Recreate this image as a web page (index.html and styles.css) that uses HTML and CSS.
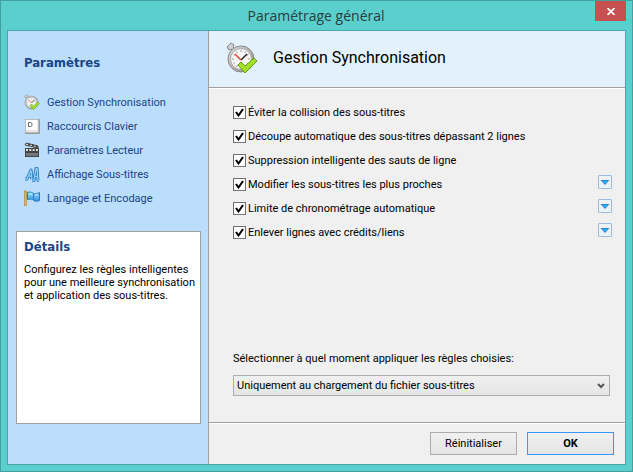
FILE: index.html
```html
<!DOCTYPE html>
<html lang="fr">
<head>
    <meta charset="UTF-8">
    <meta name="viewport" content="width=device-width, initial-scale=1.0">
    <title>Paramétrage général</title>
    <link rel="stylesheet" href="styles.css">
</head>
<body>
    <svg class="defs" aria-hidden="true">
        <defs>
            <linearGradient id="metal" x1="0" y1="0" x2="1" y2="1">
                <stop offset="0" stop-color="#e4e4e4"/>
                <stop offset="1" stop-color="#858585"/>
            </linearGradient>
            <linearGradient id="blue" x1="0" y1="0" x2="0" y2="1">
                <stop offset="0" stop-color="#9adcff"/>
                <stop offset="1" stop-color="#2f92e0"/>
            </linearGradient>
            <symbol id="stopwatch" viewBox="0 0 32 32">
                <path d="M1 5l4-4 3 2-1 2 3 3-2 2-3-3-2 1z" fill="#d0d0d0" stroke="#858585"/>
                <circle cx="15" cy="17" r="13" fill="url(#metal)" stroke="#888"/>
                <circle cx="15" cy="17" r="10.5" fill="#f6f6f6" stroke="#aaa"/>
                <path d="M15 8v2M15 24v2M6 17h2M22 17h2M10.500 9.500l1 1.500M19.500 9.500l-1 1.500M7.500 12.500l1.500 1M22.500 12.500l-1.500 1M7.500 21.500l1.500-1M10.500 25l1-2" stroke="#999"/>
                <path d="M15 18l6-6" stroke="#222" stroke-width="1.500"/>
                <path d="M15 18l-6-6" stroke="#e2452c" stroke-width="1.500"/>
                <path d="M12 23l3-3 4 4 9-8 3 3-12 12z" fill="#a4e028" stroke="#5f9c0c"/>
            </symbol>
            <symbol id="arrow" viewBox="0 0 10 6">
                <path d="M0.500 1h9L5 6z" fill="#2d83d0"/>
                <path d="M2.500 2h5L5 4.500z" fill="#27b4ff"/>
            </symbol>
        </defs>
    </svg>
    <div class="window">
        <div class="titlebar">
            <span class="titlebar-text">Paramétrage général</span>
            <button class="close" type="button" aria-label="Fermer">
                <svg width="8" height="7" viewBox="0 0 8 7"><path d="M0.500 0l7 7M7.500 0l-7 7" stroke="#fff" stroke-width="1.600"/></svg>
            </button>
        </div>
        <div class="content">
            <div class="sidebar">
                <h2>Paramètres</h2>
                <nav class="menu">
                    <a href="#"><svg viewBox="0 0 32 32"><use href="#stopwatch"/></svg>Gestion Synchronisation</a>
                    <a href="#">
                        <svg viewBox="0 0 16 16">
                            <rect x="1" y="1" width="15" height="15" rx="1" fill="#999"/>
                            <rect x="1.500" y="1.500" width="13" height="13" rx="1" fill="#e6e6e6" stroke="#bbb"/>
                            <rect x="2" y="2" width="11" height="10" fill="#fff"/>
                            <path d="M4.500 4.500h2l1.500 1v2l-1.500 1h-2z" fill="none" stroke="#666"/>
                        </svg>Raccourcis Clavier</a>
                    <a href="#">
                        <svg viewBox="0 0 16 16">
                            <path d="M2 1l12 3v2L1 3z" fill="#eee" stroke="#444"/>
                            <path d="M4 1.500l2 2M8 2.500l2 2M12 3.500l1 2" stroke="#333" stroke-width="1.500"/>
                            <rect x="1" y="6" width="14" height="9" fill="#444"/>
                            <path d="M2 8h12" stroke="#ddd" stroke-width="2" stroke-dasharray="2 1.300"/>
                            <path d="M2 12.500h12" stroke="#777" stroke-width="3"/>
                        </svg>Paramètres Lecteur</a>
                    <a href="#">
                        <svg viewBox="0 0 16 16" fill="none" stroke-linejoin="round">
                            <path d="M1 13h2l4-9 1 9M4 10h4M8 14.500h2l2-12h1l1 12h1M10 10.500h4" stroke="#2b78be" stroke-width="3"/>
                            <path d="M1 13h2l4-9 1 9M4 10h4M8 14.500h2l2-12h1l1 12h1M10 10.500h4" stroke="#8dd0f8" stroke-width="1.300"/>
                        </svg>Affichage Sous-titres</a>
                    <a href="#">
                        <svg viewBox="0 0 16 16">
                            <path d="M3.500 2.500c2-1 4 0 5 0l1 1c2 1 4 0 6-1v8c-2 1-4 1-6 0l-1-1c-2-1-3 0-5 0z" fill="url(#blue)" stroke="#2a7cc4"/>
                            <path d="M9.500 4v6" stroke="#2a7cc4"/>
                            <path d="M5 4h3M11 5h3" stroke="#d5f2ff"/>
                            <rect x="0.500" y="1" width="2" height="15" fill="#eab054" stroke="#a87020" stroke-width="0.500"/>
                        </svg>Langage et Encodage</a>
                </nav>
                <div class="details">
                    <h2>Détails</h2>
                    <p>Configurez les règles intelligentes pour une meilleure synchronisation et application des sous-titres.</p>
                </div>
            </div>
            <form class="main">
                <div class="header">
                    <svg viewBox="0 0 32 32"><use href="#stopwatch"/></svg>
                    <h1>Gestion Synchronisation</h1>
                </div>
                <div class="options">
                    <div class="option">
                        <label><input type="checkbox" checked>Éviter la collision des sous-titres</label>
                    </div>
                    <div class="option">
                        <label><input type="checkbox" checked>Découpe automatique des sous-titres dépassant 2 lignes</label>
                    </div>
                    <div class="option">
                        <label><input type="checkbox" checked>Suppression intelligente des sauts de ligne</label>
                    </div>
                    <div class="option">
                        <label><input type="checkbox" checked>Modifier les sous-titres les plus proches</label>
                        <button class="expand" type="button" aria-label="Options"><svg><use href="#arrow"/></svg></button>
                    </div>
                    <div class="option">
                        <label><input type="checkbox" checked>Limite de chronométrage automatique</label>
                        <button class="expand" type="button" aria-label="Options"><svg><use href="#arrow"/></svg></button>
                    </div>
                    <div class="option">
                        <label><input type="checkbox" checked>Enlever lignes avec crédits/liens</label>
                        <button class="expand" type="button" aria-label="Options"><svg><use href="#arrow"/></svg></button>
                    </div>
                </div>
                <div class="moment">
                    <label for="moment">Sélectionner à quel moment appliquer les règles choisies:</label>
                    <select id="moment">
                        <option selected>Uniquement au chargement du fichier sous-titres</option>
                    </select>
                </div>
                <div class="footer">
                    <button class="btn" type="reset">Réinitialiser</button>
                    <button class="btn btn-ok" type="submit">OK</button>
                </div>
            </form>
        </div>
    </div>
</body>
</html>
```
FILE: styles.css
```css
* {
    box-sizing: border-box;
}
body {
    margin: 0;
    font-family: Roboto, sans-serif;
    font-size: 11px;
    line-height: 13px;
    color: #000;
}
h1, h2, p {
    margin: 0;
}
button, select {
    font: inherit;
    color: inherit;
}
.defs {
    position: absolute;
    width: 0;
    height: 0;
}
.window {
    display: flex;
    flex-direction: column;
    min-height: 100vh;
    padding: 0 6px 6px;
    background-color: #5bcfce;
    border: 1px solid #469f9f;
}
.titlebar {
    display: flex;
    height: 29px;
    align-items: flex-start;
}
.titlebar-text {
    flex: 1;
    padding-left: 30px;
    text-align: center;
    font-family: "Open Sans", sans-serif;
    font-size: 14px;
    line-height: 29px;
    color: #26403f;
}
.close {
    display: flex;
    align-items: center;
    justify-content: center;
    width: 31px;
    height: 20px;
    padding: 0;
    border: none;
    background-color: #c75050;
}
.content {
    flex: 1;
    display: flex;
    border: 1px solid #4aa8a8;
}
/* left column */
.sidebar {
    width: 201px;
    display: flex;
    flex-direction: column;
    padding: 24px 7px 40px 8px;
    background-color: #badefb;
    border-right: 1px solid #a0a0a0;
}
.sidebar h2 {
    font-family: "DejaVu Sans Condensed", "DejaVu Sans", sans-serif;
    font-size: 13px;
    line-height: 16px;
    color: #1c4585;
}
.sidebar > h2 {
    padding-left: 8px;
}
.menu {
    padding: 19px 0 21px 8px;
}
.menu a {
    display: flex;
    align-items: center;
    gap: 7px;
    height: 24px;
    color: #1c4585;
    text-decoration: none;
}
.menu svg {
    width: 16px;
    height: 16px;
}
.details {
    flex: 1;
    padding: 7px 2px 7px 7px;
    background-color: #fff;
    border: 1px solid #a0a0a0;
}
.details p {
    margin-top: 8px;
}
/* right column */
.main {
    flex: 1;
    display: flex;
    flex-direction: column;
    background-color: #f0f0f0;
}
.header {
    display: flex;
    align-items: center;
    gap: 15px;
    height: 57px;
    padding: 0 17px 2px;
    background-color: #e3f1fd;
    border-bottom: 1px solid #a0a0a0;
}
.header svg {
    width: 32px;
    height: 32px;
}
.header h1 {
    font-size: 16px;
    line-height: 20px;
    font-weight: normal;
}
.options {
    flex: 1;
    padding: 11px 13px 0 24px;
    border-top: 1px solid #fff;
}
.option {
    display: flex;
    justify-content: space-between;
    height: 24px;
}
.option label {
    display: flex;
    align-items: center;
    gap: 2px;
}
.option input {
    appearance: none;
    width: 13px;
    height: 13px;
    margin: 0;
    border: 1px solid #707070;
    background-color: #fff;
}
.option input:checked {
    background-image: url("data:image/svg+xml,%3Csvg xmlns='http://www.w3.org/2000/svg' viewBox='0 0 11 11'%3E%3Cpath d='M2 5l2.500 3.500L9 2' fill='none' stroke='%23000' stroke-width='2'/%3E%3C/svg%3E");
}
.expand {
    display: flex;
    align-items: center;
    justify-content: center;
    width: 14px;
    height: 14px;
    margin-top: 3px;
    padding: 0;
    border: 1px solid #9db8dc;
    border-radius: 1px;
    background-color: #eef3f8;
}
.expand svg {
    width: 10px;
    height: 6px;
}
.moment {
    display: flex;
    flex-direction: column;
    gap: 10px;
    padding: 0 15px 26px 24px;
}
.moment select {
    appearance: none;
    height: 21px;
    padding: 0 16px 0 3px;
    border: 1px solid #acacac;
    border-radius: 0;
    background: url("data:image/svg+xml,%3Csvg xmlns='http://www.w3.org/2000/svg' viewBox='0 0 8 6'%3E%3Cpath d='M1 1l3 3 3-3' fill='none' stroke='%23555' stroke-width='2'/%3E%3C/svg%3E") right 4px center / 8px 6px no-repeat, linear-gradient(#f0f0f0, #e5e5e5);
}
.footer {
    display: flex;
    justify-content: flex-end;
    gap: 10px;
    padding: 9px 11px;
    border-top: 1px solid #a0a0a0;
    box-shadow: inset 0 1px #fff;
}
.btn {
    width: 87px;
    height: 23px;
    padding: 0;
    border: 1px solid #acacac;
    background: linear-gradient(#f0f0f0, #e5e5e5);
}
.btn-ok {
    border-color: #3399ff;
    font-weight: bold;
}
```
